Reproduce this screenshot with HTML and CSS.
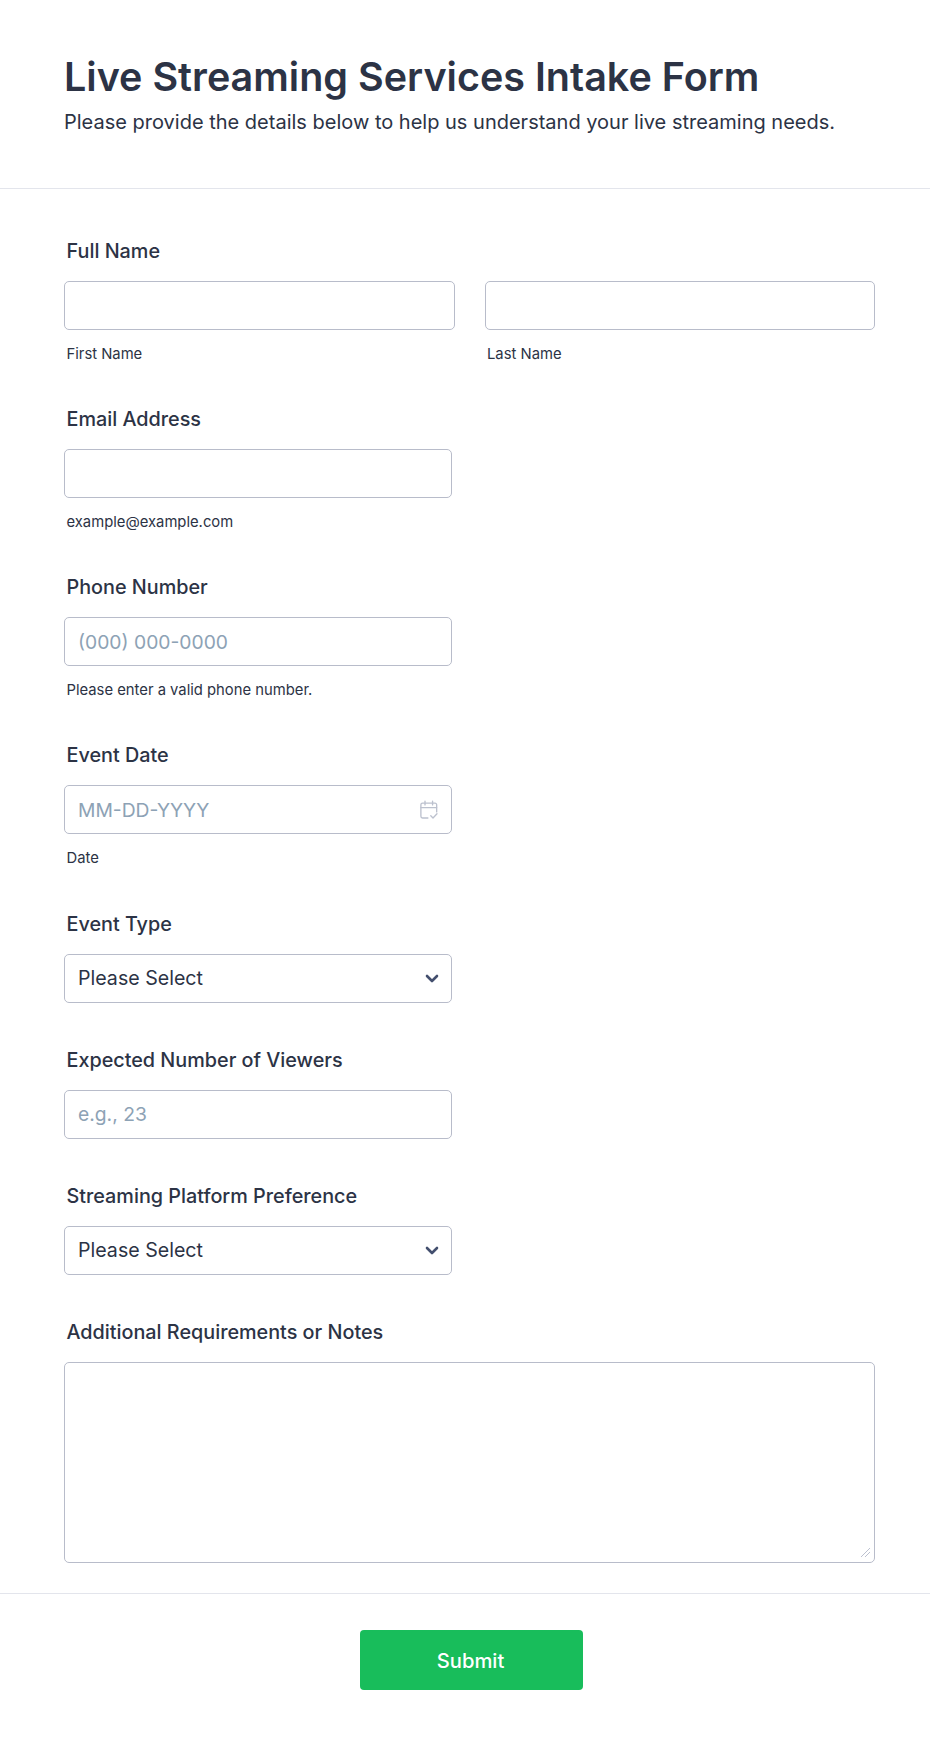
FILE: index.html
```html
<!DOCTYPE html>
<html lang="en">
<head>
<meta charset="utf-8">
<title>Live Streaming Services Intake Form</title>
<link rel="stylesheet" href="styles.css">
</head>
<body>
<form class="form">
  <header class="head">
    <h1 class="title">Live Streaming Services Intake Form</h1>
    <p class="intro">Please provide the details below to help us understand your live streaming needs.</p>
  </header>
  <div class="fields">
    <div class="field has-sub">
      <label class="label">Full Name</label>
      <div class="name-row">
        <div class="name-col"><input class="input" type="text"><span class="sub">First Name</span></div>
        <div class="name-col"><input class="input" type="text"><span class="sub">Last Name</span></div>
      </div>
    </div>
    <div class="field has-sub">
      <label class="label">Email Address</label>
      <input class="input narrow" type="text">
      <span class="sub">example@example.com</span>
    </div>
    <div class="field has-sub">
      <label class="label">Phone Number</label>
      <input class="input narrow" type="text" placeholder="(000) 000-0000">
      <span class="sub">Please enter a valid phone number.</span>
    </div>
    <div class="field has-sub">
      <label class="label">Event Date</label>
      <div class="wrap narrow">
        <input class="input" type="text" placeholder="MM-DD-YYYY">
        <svg class="cal" viewBox="0 0 18 18" width="20" height="20" fill="none" stroke="#bcc1ce" stroke-width="1.2" stroke-linecap="round" stroke-linejoin="round">
          <path d="M8 16.2H3.2a1.5 1.5 0 0 1-1.5-1.5V4.3a1.5 1.5 0 0 1 1.5-1.5h11.2a1.5 1.5 0 0 1 1.5 1.5v6.4"/>
          <path d="M1.7 6.8h14.2M5.4 1v3.4M12.2 1v3.4"/>
          <path d="M10.6 14.2l2 2 3.6-3.8"/>
        </svg>
      </div>
      <span class="sub">Date</span>
    </div>
    <div class="field">
      <label class="label">Event Type</label>
      <div class="wrap narrow">
        <select class="input select"><option>Please Select</option></select>
        <svg class="chev" viewBox="0 0 14 9" width="14" height="9" fill="none" stroke="#434f6e" stroke-width="2.6" stroke-linecap="round" stroke-linejoin="round"><path d="M2 2l5 5 5-5"/></svg>
      </div>
    </div>
    <div class="field">
      <label class="label">Expected Number of Viewers</label>
      <input class="input narrow" type="text" placeholder="e.g., 23">
    </div>
    <div class="field">
      <label class="label">Streaming Platform Preference</label>
      <div class="wrap narrow">
        <select class="input select"><option>Please Select</option></select>
        <svg class="chev" viewBox="0 0 14 9" width="14" height="9" fill="none" stroke="#434f6e" stroke-width="2.6" stroke-linecap="round" stroke-linejoin="round"><path d="M2 2l5 5 5-5"/></svg>
      </div>
    </div>
    <div class="field last">
      <label class="label">Additional Requirements or Notes</label>
      <textarea class="input area"></textarea>
    </div>
  </div>
  <footer class="foot">
    <button class="submit" type="button">Submit</button>
  </footer>
</form>
</body>
</html>
```
FILE: styles.css
```css
* { box-sizing: border-box; }
html, body { margin: 0; padding: 0; background: #fff; }
body { font-family: Inter, "Liberation Sans", sans-serif; color: #2c3345; }
.form { width: 930px; height: 1740px; display: flex; flex-direction: column; }
.head { height: 189px; padding: 52px 64px 0; border-bottom: 1px solid #e3e5ec; }
.title { margin: 0; font-size: 39.5px; line-height: 50px; font-weight: 600; letter-spacing: 0; }
.intro { margin: 8px 0 0; font-size: 20px; line-height: 24px; font-weight: 400; }
.fields { padding: 50px 55px 0 64px; flex: 1; }
.field { display: flex; flex-direction: column; margin-bottom: 45px; }
.field.has-sub { margin-bottom: 44.15px; }
.field.last { margin-bottom: 0; }
.label { display: block; font-size: 19.8px; line-height: 25px; font-weight: 500; margin: 0 0 17px 2.5px; }
.name-row { display: flex; gap: 30px; }
.name-col { flex: 1; display: flex; flex-direction: column; }
.input { display: block; width: 100%; height: 49px; padding: 0 13px; border: 1px solid #b8bcca; border-radius: 5px; background: #fff; font-family: inherit; font-size: 19.6px; color: #2c3345; outline: none; }
.input::placeholder { color: #8da2b5; opacity: 1; font-size: 19.3px; }
.narrow { width: 388px; }
.sub { display: block; margin: 16px 0 0 2.5px; font-size: 14.8px; line-height: 17px; color: #2c3345; }
.wrap { position: relative; }
.cal { position: absolute; right: 13px; top: 15px; }
.chev { position: absolute; right: 13px; top: 20px; pointer-events: none; }
.select { appearance: none; -webkit-appearance: none; }
.area { height: 201px; padding: 10px 13px; resize: vertical; }
.area::-webkit-resizer { background: linear-gradient(135deg, transparent 0 47%, #bcc1d0 47% 55%, transparent 55% 68%, #bcc1d0 68% 76%, transparent 76%) 2px 1px / 9px 9px no-repeat; }
.foot { height: 147px; border-top: 1px solid #e3e5ec; display: flex; justify-content: center; padding: 36px 0 0 12px; }
.submit { width: 223px; height: 60px; padding: 1px 1px 0 0; border: 0; border-radius: 4px; background: #18bd5b; color: #fff; font-family: inherit; font-size: 20.2px; font-weight: 450; }
```
